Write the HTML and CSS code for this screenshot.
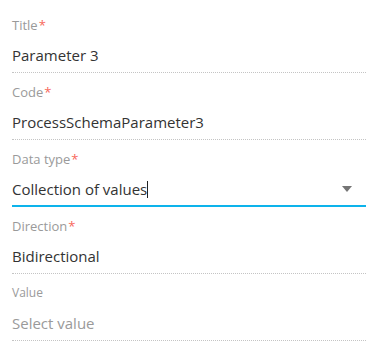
FILE: index.html
```html
<!DOCTYPE html>
<html>
<head>
<meta name="viewport" content="width=device-width, initial-scale=1">
<link rel="stylesheet" href="styles.css">
</head>
<body>

<div class="form">
  <div class="field">
    <div class="label">Title<span class="required">*</span></div>
    <div class="value">Parameter 3</div>
  </div>

  <div class="field">
    <div class="label">Code<span class="required">*</span></div>
    <div class="value">ProcessSchemaParameter3</div>
  </div>

  <div class="field focused">
    <div class="label">Data type<span class="required">*</span></div>
    <div class="value select">
      <span>Collection of values<span class="caret"></span></span>
      <span class="arrow"></span>
    </div>
  </div>

  <div class="field">
    <div class="label">Direction<span class="required">*</span></div>
    <div class="value">Bidirectional</div>
  </div>

  <div class="field">
    <div class="label small">Value</div>
    <div class="value placeholder">Select value</div>
  </div>
</div>

</body>
</html>
```

FILE: styles.css
```css
* {
  box-sizing: border-box;
}

body {
  margin: 0;
  background: #ffffff;
  font-family: "Open Sans", "Liberation Sans", sans-serif;
}

/* Form column */
.form {
  padding: 6px 4px 0 12px;
}

.field {
  padding: 10px 0 5px 0;
  border-bottom: 1px dotted #c4c4c4;
}

/* Active field gets a thicker blue line */
.field.focused {
  padding-bottom: 4px;
  border-bottom: 2px solid #0db3eb;
}

.label {
  font-size: 13px;
  line-height: 18px;
  color: #9a9a9a;
  margin-bottom: 9px;
}

.label.small {
  font-size: 12px;
}

.required {
  color: #f7685b;
  margin-left: 1px;
}

.value {
  font-size: 15px;
  line-height: 24px;
  color: #333333;
}

.value.placeholder {
  color: #9a9a9a;
}

.select {
  display: flex;
  justify-content: space-between;
  align-items: center;
}

.caret {
  display: inline-block;
  width: 1px;
  height: 17px;
  background: #222222;
  vertical-align: -3px;
}

/* Dropdown triangle */
.arrow {
  width: 0;
  height: 0;
  margin-right: 14px;
  border-left: 5px solid transparent;
  border-right: 5px solid transparent;
  border-top: 6px solid #757575;
}
```
